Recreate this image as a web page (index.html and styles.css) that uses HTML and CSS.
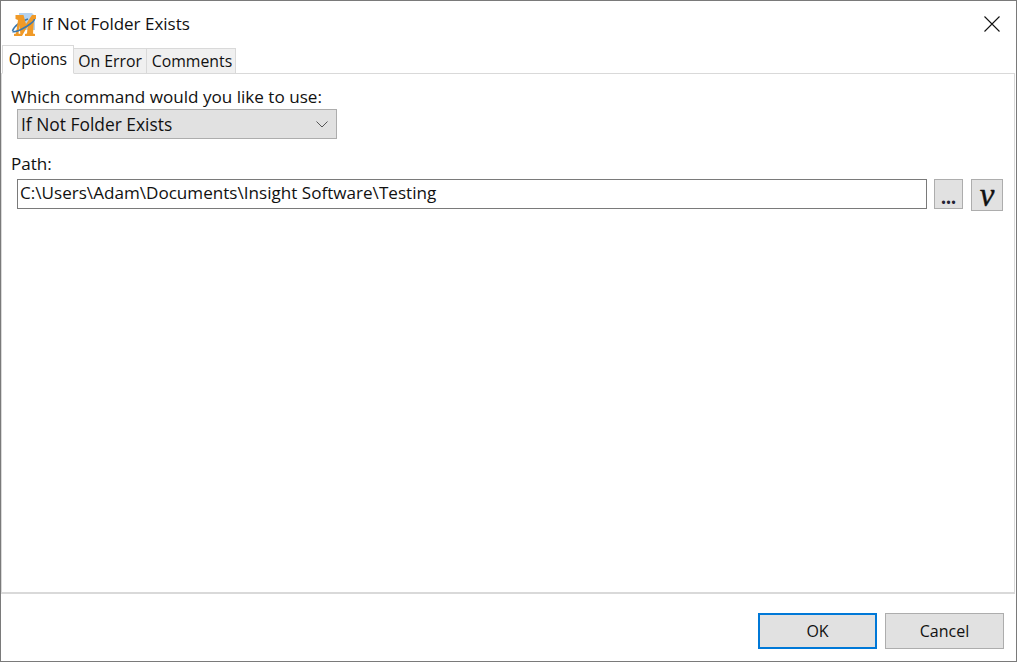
FILE: index.html
```html
<!DOCTYPE html>
<html lang="en">
<head>
<meta charset="utf-8">
<title>If Not Folder Exists</title>
<link rel="stylesheet" href="styles.css">
</head>
<body>
<div class="window">
  <header class="titlebar">
    <svg class="app-icon" width="26" height="26" viewBox="0 0 26 26">
      <path d="M8 1h13l3 3v14H8z" fill="#b4d3f2"/>
      <path d="M1.500 19C3 14 10 9 17 7" fill="none" stroke="#3a78ae" stroke-width="1.600"/>
      <path d="M3 24v-2l2-.5L7 8 4.500 7V3h8l2.500 9 6-9h4v4l-2 .5L22 21.500l2 .5v2H14v-2l2-.5.700-7.500L11 24H9.500L8.500 13 7.500 21.500l2 .5v2z" fill="#f09a28"/>
      <path d="M1.500 19.500c2 1 8-1.500 14-5 4-2.500 8-5.500 8-7.500" fill="none" stroke="#3a78ae" stroke-width="1.600"/>
    </svg>
    <span class="title">If Not Folder Exists</span>
    <svg class="close" width="16" height="16" viewBox="0 0 16 16"><path d="M.5.5l15 15M15.500.5l-15 15" stroke="#111" stroke-width="1.1" fill="none"/></svg>
  </header>
  <nav class="tabs">
    <div class="tab active">Options</div>
    <div class="tab tab-error">On Error</div>
    <div class="tab tab-comments">Comments</div>
  </nav>
  <main class="page">
    <label class="label">Which command would you like to use:</label>
    <div class="select">
      <span>If Not Folder Exists</span>
      <svg width="12" height="7" viewBox="0 0 12 7"><path d="M.5.5L6 6 11.500.5" fill="none" stroke="#555" stroke-width="1"/></svg>
    </div>
    <label class="label label-path">Path:</label>
    <div class="path-row">
      <div class="input">C:\Users\Adam\Documents\Insight Software\Testing</div>
      <div class="btn dots">...</div>
      <div class="btn var">v</div>
    </div>
  </main>
  <footer class="footer">
    <div class="btn action default">OK</div>
    <div class="btn action">Cancel</div>
  </footer>
</div>
</body>
</html>
```
FILE: styles.css
```css
html, body {
  margin: 0;
  padding: 0;
  height: 100%;
  background: #fff;
  overflow: hidden;
}
.window {
  box-sizing: border-box;
  width: 1017px;
  height: 662px;
  border: 1px solid #7a7a7a;
  background: #fff;
  display: flex;
  flex-direction: column;
  font-family: "Open Sans", "Noto Sans", sans-serif;
  font-size: 17.100px;
  color: #111;
}
.titlebar {
  height: 45px;
  flex: none;
  display: flex;
  align-items: center;
  padding-right: 16px;
}
.app-icon {
  margin-left: 10px;
  margin-top: 2px;
}
.title {
  margin-left: 5px;
  font-size: 17px;
  line-height: 44px;
}
.close {
  margin-left: auto;
}
.tabs {
  flex: none;
  display: flex;
  align-items: flex-end;
  height: 28px;
  padding-left: 1px;
  position: relative;
  z-index: 1;
  margin-bottom: -1px;
}
.tab {
  box-sizing: border-box;
  height: 26px;
  line-height: 24px;
  text-align: center;
  background: #f0f0f0;
  border: 1px solid #d9d9d9;
  border-left: 0;
  border-bottom: 1px solid #d9d9d9;
  font-size: 15.800px;
}
.tab.active {
  width: 72px;
  height: 29px;
  background: #fff;
  border: 1px solid #d9d9d9;
  border-bottom-color: #fff;
  line-height: 27px;
}
.tab-error { width: 73px; }
.tab-comments {
  width: 89px;
  padding-left: 2px;
}
.page {
  box-sizing: border-box;
  flex: none;
  width: 1014px;
  height: 521px;
  border: 1px solid #d9d9d9;
  border-width: 1px 1px 2px 1px;
  padding: 12px 0 0 9px;
}
.label {
  display: block;
  line-height: 22px;
  height: 22px;
}
.select {
  box-sizing: border-box;
  width: 320px;
  height: 30px;
  margin: 1px 0 0 6px;
  background: #e1e1e1;
  border: 1px solid #adadad;
  display: flex;
  align-items: center;
  justify-content: space-between;
  padding: 0 8px 0 3px;
  font-size: 17.400px;
}
.label-path {
  margin-top: 14px;
}
.path-row {
  display: flex;
  align-items: flex-start;
  margin: 4px 0 0 6px;
}
.input {
  box-sizing: border-box;
  width: 910px;
  height: 30px;
  border: 1px solid #7a7a7a;
  line-height: 26px;
  padding-left: 2px;
  white-space: nowrap;
}
.btn {
  box-sizing: border-box;
  background: #e1e1e1;
  border: 1px solid #adadad;
  text-align: center;
}
.dots {
  width: 29px;
  height: 30px;
  margin-left: 7px;
  font-family: "Liberation Serif", serif;
  font-weight: 700;
  font-size: 20px;
  line-height: 34px;
  color: #223;
}
.var {
  width: 32px;
  height: 32px;
  margin-left: 8px;
  font-family: "Liberation Serif", serif;
  font-style: italic;
  font-size: 33px;
  line-height: 30px;
  -webkit-text-stroke: 0.4px #111;
}
.footer {
  flex: 1;
  display: flex;
  justify-content: flex-end;
  gap: 8px;
  padding: 19px 12px 0 0;
}
.action {
  width: 119px;
  height: 36px;
  line-height: 34px;
  font-size: 16px;
  border-width: 1px;
}
.action.default {
  border: 2px solid #0078d7;
  line-height: 32px;
}
```
